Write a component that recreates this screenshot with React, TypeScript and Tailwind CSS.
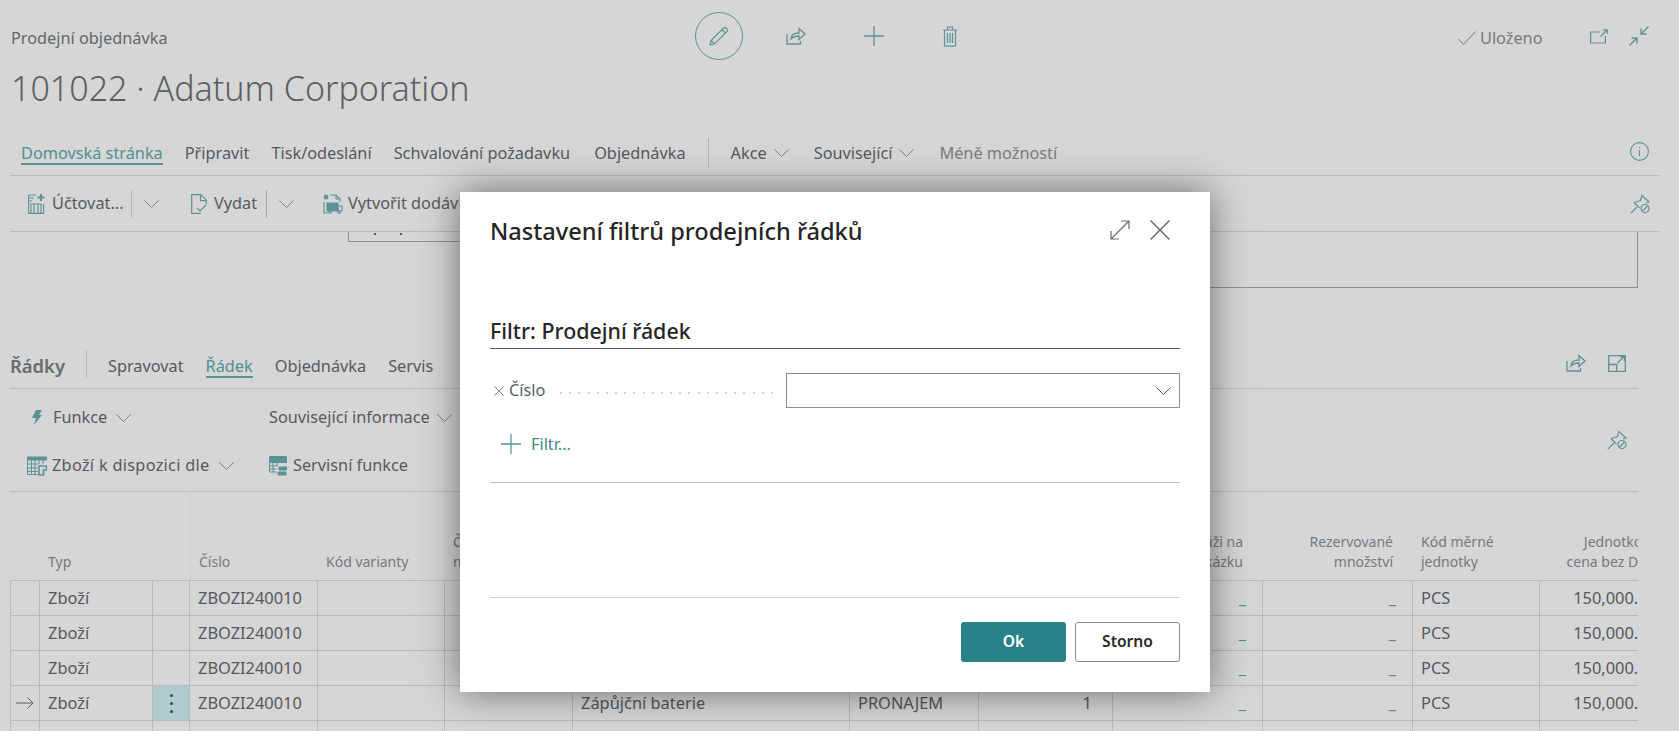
import React from 'react';

const teal = 'text-[#5b9296]';

const Chevron = ({ className = 'w-[15px] h-[8px] text-[#7d8285]' }: { className?: string }) => (
  <svg viewBox="0 0 15 8" className={className} fill="none" stroke="currentColor" strokeWidth="1">
    <path d="M0.5 0.5 7.5 7.5 14.5 0.5" />
  </svg>
);

const Pencil = () => (
  <svg viewBox="0 0 20 20" className={`w-[20px] h-[20px] ${teal}`} fill="none" stroke="currentColor" strokeWidth="1.2">
    <path d="M1 19l1.2-4.6L14.6 2a1.8 1.8 0 0 1 2.5 0l.9.9a1.8 1.8 0 0 1 0 2.5L5.6 17.8zM13 3.6l3.4 3.4M2.2 14.4l3.4 3.4" />
  </svg>
);

const Share = ({ className = 'w-[20px] h-[18px]' }: { className?: string }) => (
  <svg viewBox="0 0 20 18" className={`${className} ${teal}`} fill="none" stroke="currentColor" strokeWidth="1.3">
    <path d="M1 7v10h13.500v-3M5 12c.2-3.600 3-6 8-6V1.500L19 7l-6 5.500V9c-3.500 0-6 1-8 3z" />
  </svg>
);

const Trash = () => (
  <svg viewBox="0 0 16 21" className={`w-[16px] h-[21px] ${teal}`} fill="none" stroke="currentColor" strokeWidth="1.200">
    <path d="M1 4h14M2.500 4v15a1.200 1.200 0 0 0 1.200 1.200h8.600a1.200 1.200 0 0 0 1.200-1.200V4M5.500 4V1h5v3M5.500 7v10M8 7v10M10.500 7v10" />
  </svg>
);

const Plus = ({ className = 'w-[20px] h-[20px]' }: { className?: string }) => (
  <svg viewBox="0 0 20 20" className={`${className} ${teal}`} fill="none" stroke="currentColor" strokeWidth="1.300">
    <path d="M10 0v20M0 10h20" />
  </svg>
);

const OpenNew = () => (
  <svg viewBox="0 0 18 15" className={`w-[18px] h-[15px] ${teal}`} fill="none" stroke="currentColor" strokeWidth="1.200">
    <path d="M10 3H.6v11h14.800V7M10.500 7.500 17 1M13 .8h4.200V5" />
  </svg>
);

const Collapse = () => (
  <svg viewBox="0 0 20 20" className={`w-[20px] h-[20px] ${teal}`} fill="none" stroke="currentColor" strokeWidth="1.300">
    <path d="M19.500.5 12 8M12 2.500V8h5.500M.5 19.500 8 12M2.500 12H8v5.500" />
  </svg>
);

const Info = () => (
  <svg viewBox="0 0 19 19" className={`w-[19px] h-[19px] ${teal}`} fill="none" stroke="currentColor" strokeWidth="1.100">
    <circle cx="9.500" cy="9.500" r="8.900" />
    <path d="M9.500 8v6M9.500 5v1.200" />
  </svg>
);

const PinOff = () => (
  <svg viewBox="0 0 20 20" className={`w-[20px] h-[20px] ${teal}`} fill="none" stroke="currentColor" strokeWidth="1.200">
    <path d="M.8 19.200 7 13M4 8.500l6.500-2 1.500-5 7 6.500-3.200 1M4 8.500l3.500 3.500 2 2" />
    <circle cx="15" cy="14.500" r="4" />
    <path d="M12.500 17l5-5" />
  </svg>
);

const ExpandBox = () => (
  <svg viewBox="0 0 18 17" className={`w-[18px] h-[17px] ${teal}`} fill="none" stroke="currentColor" strokeWidth="1.300">
    <path d="M.7.7h16.600v15.600H.7zM.7 9.500h8v6.800M9.500 8 16 1.500M12 1.500h4.500V6" />
  </svg>
);

const Arrow2 = () => (
  <svg viewBox="0 0 20 20" className="w-[20px] h-[20px] text-[#6b6b6b]" fill="none" stroke="currentColor" strokeWidth="1.200">
    <path d="M1 19 19 1M11 1h8v8M1 11v8h8" />
  </svg>
);

const Close = () => (
  <svg viewBox="0 0 20 20" className="w-[20px] h-[20px] text-[#5f5f5f]" fill="none" stroke="currentColor" strokeWidth="1.300">
    <path d="M.5.5l19 19M19.500.5l-19 19" />
  </svg>
);

const PostIcon = () => (
  <svg viewBox="0 0 17 20" className={`w-[17px] h-[20px] ${teal}`} fill="none" stroke="currentColor" strokeWidth="1.100">
    <path d="M1 1h7M1 4h5M1 7h3M.6 1v18.400h15V10M3 19V10h10v9M6 10v9M10 10v9" />
    <path d="M13 0v7M9.500 3.500h7" strokeWidth="2" />
  </svg>
);

const DocCheck = () => (
  <svg viewBox="0 0 16 20" className={`w-[16px] h-[20px] ${teal}`} fill="none" stroke="currentColor" strokeWidth="1.200">
    <path d="M10 19.400H.7V.6h9l5.600 5.600V10M9.500.6v6h5.800M6 14l3 3 6-6" />
  </svg>
);

const ShipIcon = () => (
  <svg viewBox="0 0 20 20" className={`w-[20px] h-[20px] ${teal}`} fill="none" stroke="currentColor" strokeWidth="1.100">
    <path d="M1 1l4 4M5 1 1 5M3 .5v5M.5 3h5M7 1h6l4 4v3M13 1v4h4M1 8v11h4" />
    <path d="M4 9h11v8H4z" fill="currentColor" />
    <path d="M15 12h4v5h-4" />
    <circle cx="7" cy="18" r="1.300" />
    <circle cx="16" cy="18" r="1.300" />
  </svg>
);

const Bolt = () => (
  <svg viewBox="0 0 10 15" className={`w-[10px] h-[15px] ${teal}`} fill="currentColor">
    <path d="M4 0h6L7 5h3L2 15l2-7H0z" />
  </svg>
);

const GridIcon = () => (
  <svg viewBox="0 0 20 20" className={`w-[20px] h-[20px] ${teal}`} fill="none" stroke="currentColor" strokeWidth="1">
    <path d="M.5 1h19v3H.5z" fill="currentColor" />
    <path d="M.5 4v14.500h10M.5 8h11M.5 12h10M.5 15.500h10M4.500 4v14.500M8 4v14.500M12 4v4M16 4v4" />
    <path d="M12 10h7.500v4h-3v5H12z" strokeWidth="1.600" />
  </svg>
);

const ServiceIcon = () => (
  <svg viewBox="0 0 18 20" className={`w-[18px] h-[20px] ${teal}`} fill="none" stroke="currentColor" strokeWidth="1">
    <path d="M.5.5h17v6H.5z" fill="currentColor" />
    <path d="M.5 7v9h7M.5 10h8M.5 13h7M4 7v9M8 7v3" />
    <path d="M10 11h7.500v3H10zM9 16h8v3H9z" fill="currentColor" />
  </svg>
);

const Tab = ({ label, active, dim }: { label: string; active?: boolean; dim?: boolean }) => (
  <div
    className={`h-[25px] pt-[3px] flex items-center border-b-2 whitespace-nowrap ${
      active ? 'border-[#5b9296] text-[#4f8f93]' : dim ? 'border-transparent text-[#7a7d80]' : 'border-transparent text-[#55595d]'
    }`}
  >
    {label}
  </div>
);

const columns = 'grid grid-cols-[30px_113px_37px_128px_127px_128px_277px_129px_134px_150px_150px_127px_137px]';

const HeadCell = ({ children, right, edge }: { children?: React.ReactNode; right?: boolean; edge?: boolean }) => (
  <div
    className={`flex flex-col justify-end pb-[8px] px-[8px] text-[14px] leading-[20px] text-[#75797d] whitespace-nowrap ${right ? 'items-end pr-[20px]' : ''} ${
      edge ? 'border-l border-[#cdcdd0]' : ''
    }`}
  >
    {children}
  </div>
);

const Cell = ({ children, className = '' }: { children?: React.ReactNode; className?: string }) => (
  <div className={`h-[35px] border-r border-b border-[#b9b9bd] flex items-center whitespace-nowrap ${className}`}>{children}</div>
);

const Row = ({ current, empty }: { current?: boolean; empty?: boolean }) => (
  <div className={`${columns} text-[16.400px] text-[#54585c]`}>
    <Cell className="border-l justify-center">
      {current && (
        <svg viewBox="0 0 18 12" className="w-[18px] h-[12px] text-[#5d5d5d]" fill="none" stroke="currentColor" strokeWidth="1">
          <path d="M0 6h17M11.500.5 17 6l-5.500 5.500" />
        </svg>
      )}
    </Cell>
    <Cell className="pl-[8px]">{!empty && 'Zboží'}</Cell>
    <Cell className={`justify-center ${current ? 'bg-[#afcbce]' : ''}`}>
      {current && (
        <div className="flex flex-col gap-[5px]">
          <div className="w-[3px] h-[3px] rounded-full bg-[#3d4347]" />
          <div className="w-[3px] h-[3px] rounded-full bg-[#3d4347]" />
          <div className="w-[3px] h-[3px] rounded-full bg-[#3d4347]" />
        </div>
      )}
    </Cell>
    <Cell className="pl-[8px]">{!empty && 'ZBOZI240010'}</Cell>
    <Cell />
    <Cell />
    <Cell className="pl-[8px]">{!empty && 'Zápůjční baterie'}</Cell>
    <Cell className="pl-[8px]">{!empty && 'PRONAJEM'}</Cell>
    <Cell className="justify-end pr-[20px]">{!empty && '1'}</Cell>
    <Cell className="justify-end pr-[16px] text-[#4f8f93]">{!empty && '_'}</Cell>
    <Cell className="justify-end pr-[16px] text-[#4f8f93]">{!empty && '_'}</Cell>
    <Cell className="pl-[8px]">{!empty && 'PCS'}</Cell>
    <Cell className="justify-end pr-[20px] border-r-0">{!empty && '150,000.00'}</Cell>
  </div>
);

const leaderDots = Array.from({ length: 24 }, (_, i) => i);

export default function App() {
  return (
    <div className="relative h-[731px] w-[1679px] overflow-hidden bg-[#d6d6d6] font-['Noto_Sans',sans-serif] text-[16.300px]">
      {/* page header */}
      <div className="h-[72px] flex items-center pl-[11px]">
        <div className="w-[684px] pt-[4px] text-[#62666a]">Prodejní objednávka</div>
        <div className="w-[48px] h-[48px] rounded-full border border-[#5b9296] flex items-center justify-center">
          <Pencil />
        </div>
        <div className="ml-[43px]"><Share /></div>
        <div className="ml-[58px]"><Plus /></div>
        <div className="ml-[58px]"><Trash /></div>
        <div className="ml-[500px] flex items-center gap-[4px] pt-[4px] text-[#777b7f]">
          <svg viewBox="0 0 18 14" className="w-[18px] h-[14px] text-[#777b7f]" fill="none" stroke="currentColor" strokeWidth="1">
            <path d="M.5 8 5.500 13.500 17.500.5" />
          </svg>
          Uloženo
        </div>
        <div className="ml-[47px]"><OpenNew /></div>
        <div className="ml-[21px]"><Collapse /></div>
      </div>
      <div className="h-[32px] pl-[11px] text-[34px] leading-[32px] font-light text-[#5c5f62]">101022 · Adatum Corporation</div>

      {/* tabs */}
      <div className="h-[72px] ml-[10px] mr-[19px] border-b border-[#bcbcbc] flex items-start pt-[36px] pl-[11px] gap-[22px]">
        <Tab label="Domovská stránka" active />
        <Tab label="Připravit" />
        <Tab label="Tisk/odeslání" />
        <Tab label="Schvalování požadavku" />
        <div className="ml-[2px]"><Tab label="Objednávka" /></div>
        <div className="w-px h-[29px] -mt-[2px] bg-[#b5b5b5]" />
        <div className="flex items-center gap-[7px]"><Tab label="Akce" /><Chevron /></div>
        <div className="ml-[3px] flex items-center gap-[7px]"><Tab label="Související" /><Chevron /></div>
        <div className="ml-[3px]"><Tab label="Méně možností" dim /></div>
        <div className="ml-auto mr-[11px] mt-[2px]"><Info /></div>
      </div>

      {/* actions */}
      <div className="h-[56px] ml-[10px] mr-[19px] border-b border-[#bcbcbc] flex items-center pl-[18px] text-[#55595d]">
        <PostIcon />
        <span className="ml-[7px] w-[79px]">Účtovat...</span>
        <div className="w-px h-[28px] bg-[#b5b5b5]" />
        <div className="ml-[12px]"><Chevron /></div>
        <div className="ml-[32px]"><DocCheck /></div>
        <span className="ml-[7px] w-[52px]">Vydat</span>
        <div className="w-px h-[28px] bg-[#a9a9a9]" />
        <div className="ml-[12px]"><Chevron /></div>
        <div className="ml-[29px]"><ShipIcon /></div>
        <span className="ml-[5px] whitespace-nowrap">Vytvořit dodávku</span>
        <div className="ml-auto mr-[10px]"><PinOff /></div>
      </div>

      {/* general fields behind the dialog */}
      <div className="h-[56px] ml-[348px] w-[1290px] flex items-start">
        <div className="w-[400px] h-[10px] border-l border-b border-[#8b9095] flex gap-[24px] pl-[25px] pt-[1px]">
          <div className="w-[2px] h-[2px] bg-[#55595d]" />
          <div className="w-[2px] h-[2px] bg-[#55595d]" />
        </div>
        <div className="flex-1 h-[56px] border-r border-b border-[#8b9095]" />
      </div>

      {/* lines part */}
      <div className="ml-[10px] w-[1628px]">
        <div className="h-[101px] border-b border-[#bcbcbc] flex items-end pb-[10px] text-[#55595d]">
          <div className="h-[25px] pt-[1px] flex items-center text-[18.400px] font-semibold text-[#686c70]">Řádky</div>
          <div className="w-px h-[28px] ml-[21px] bg-[#b9b9b9]" />
          <div className="flex gap-[22px] ml-[21px]">
            <Tab label="Spravovat" />
            <Tab label="Řádek" active />
            <Tab label="Objednávka" />
            <Tab label="Servis" />
          </div>
          <div className="ml-auto mb-[6px] mr-[12px] flex items-center gap-[22px]">
            <Share />
            <ExpandBox />
          </div>
        </div>

        <div className="h-[103px] border-b border-[#bcbcbc] flex items-center text-[#55595d]">
          <div className="flex-1 flex flex-col pt-[3px]">
            <div className="h-[48px] flex items-center">
              <div className="w-[259px] flex items-center pl-[22px]">
                <Bolt />
                <span className="ml-[11px]">Funkce</span>
                <div className="ml-[9px]"><Chevron /></div>
              </div>
              <span>Související informace</span>
              <div className="ml-[7px]"><Chevron /></div>
            </div>
            <div className="h-[48px] flex items-center">
              <div className="w-[259px] flex items-center pl-[17px]">
                <GridIcon />
                <span className="ml-[5px] tracking-[0.3px]">Zboží k dispozici dle</span>
                <div className="ml-[9px]"><Chevron /></div>
              </div>
              <ServiceIcon />
              <span className="ml-[6px]">Servisní funkce</span>
            </div>
          </div>
          <div className="mr-[11px]"><PinOff /></div>
        </div>

        <div className="overflow-hidden">
          <div className="w-[1750px]">
            <div className={`${columns} h-[89px] border-b border-[#b9b9bd]`}>
              <HeadCell />
              <HeadCell>Typ</HeadCell>
              <HeadCell />
              <HeadCell edge>Číslo</HeadCell>
              <HeadCell>Kód varianty</HeadCell>
              <HeadCell>
                <span>Číslo</span>
                <span>nákladu</span>
              </HeadCell>
              <HeadCell>Popis</HeadCell>
              <HeadCell>Kód lokace</HeadCell>
              <HeadCell right>Množství</HeadCell>
              <HeadCell right>
                <span>Množství k montáži na</span>
                <span>zakázku</span>
              </HeadCell>
              <HeadCell right>
                <span>Rezervované</span>
                <span>množství</span>
              </HeadCell>
              <HeadCell>
                <span>Kód měrné</span>
                <span>jednotky</span>
              </HeadCell>
              <HeadCell right>
                <span>Jednotková</span>
                <span>cena bez DPH</span>
              </HeadCell>
            </div>
            <Row />
            <Row />
            <Row />
            <Row current />
            <Row empty />
          </div>
        </div>
      </div>

      {/* filter dialog */}
      <div className="absolute left-[460px] top-[192px] w-[750px] h-[500px] bg-white px-[30px] shadow-[0_0_36px_rgba(0,0,0,0.5)] flex flex-col">
        <div className="h-[80px] flex items-center">
          <div className="text-[23.600px] font-medium text-[#252525]">Nastavení filtrů prodejních řádků</div>
          <div className="ml-auto flex items-center gap-[20px] pb-[4px] pr-[10px]">
            <Arrow2 />
            <Close />
          </div>
        </div>
        <div className="h-[77px] border-b border-[#505a64] flex items-end pb-[1px] text-[21.400px] font-medium text-[#252525]">Filtr: Prodejní řádek</div>
        <div className="mt-[24px] h-[35px] flex items-center text-[#5a5e62]">
          <svg viewBox="0 0 11 11" className="ml-[4px] w-[10px] h-[10px] text-[#777]" fill="none" stroke="currentColor" strokeWidth="1">
            <path d="M.5.5l10 10M10.500.5l-10 10" />
          </svg>
          <span className="ml-[5px] w-[38px]">Číslo</span>
          <div className="ml-[13px] w-[213px] mt-[4px] flex justify-between">
            {leaderDots.map(i => (
              <div key={i} className="w-[2px] h-[2px] rounded-full bg-[#c4c4c4]" />
            ))}
          </div>
          <div className="ml-[13px] flex-1 h-[35px] border border-[#8a8f94] flex items-center justify-end pr-[8px]">
            <Chevron className="w-[15px] h-[8px] text-[#555]" />
          </div>
        </div>
        <div className="mt-[24px] h-[24px] flex items-center pl-[11px] text-[#3f878b]">
          <Plus />
          <span className="ml-[10px]">Filtr...</span>
        </div>
        <div className="mt-[26px] border-b border-[#bdbdbd]" />
        <div className="mt-[114px] border-b border-[#cfcfcf]" />
        <div className="mt-[24px] flex justify-end gap-[9px] text-[15.600px] font-semibold">
          <div className="w-[105px] h-[40px] rounded-[3px] bg-[#2a8187] text-white flex items-center justify-center">Ok</div>
          <div className="w-[105px] h-[40px] rounded-[3px] border border-[#8a8a8a] text-[#2a2a2a] flex items-center justify-center">Storno</div>
        </div>
      </div>
    </div>
  );
}
